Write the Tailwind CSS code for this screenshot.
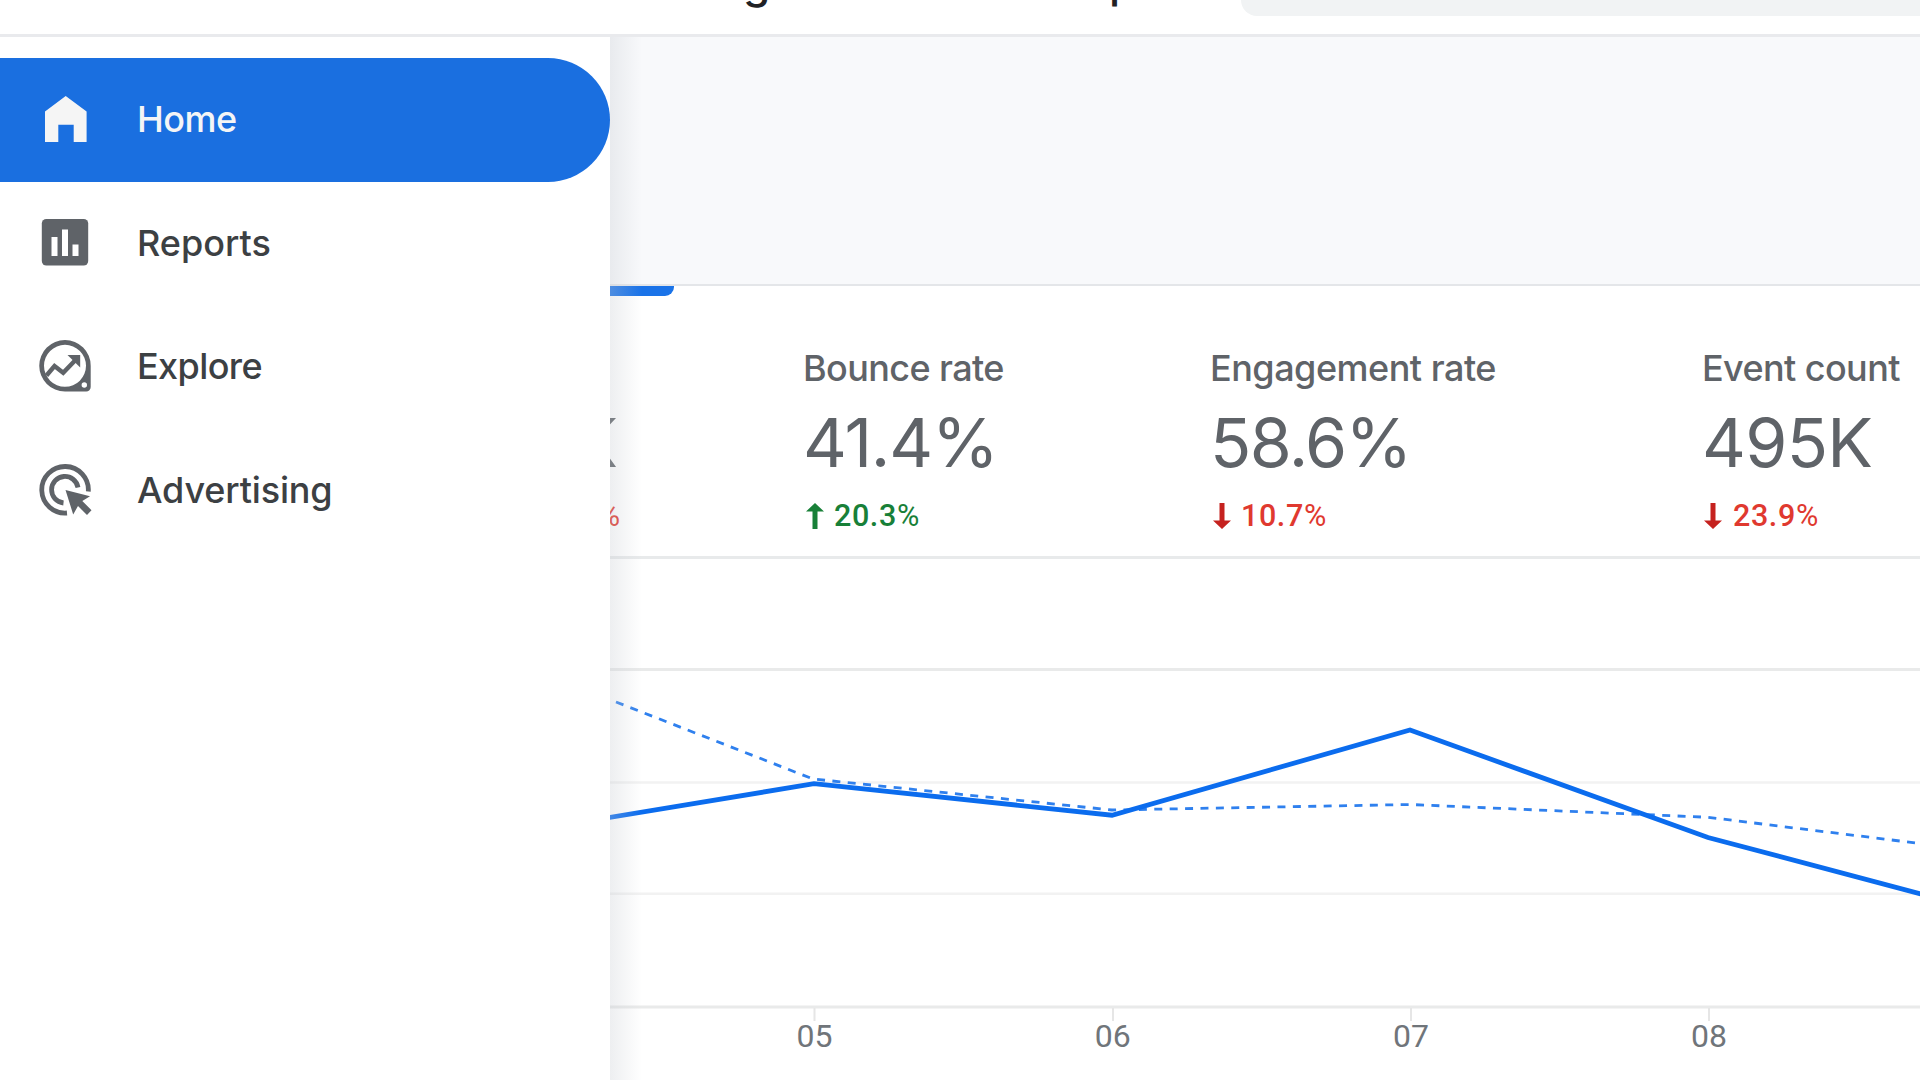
<!DOCTYPE html>
<html lang="en">
  <head>
    <meta charset="UTF-8" />
    <meta name="viewport" content="width=device-width, initial-scale=1.0" />
    <title>Analytics</title>
    <script src="https://cdn.jsdelivr.net/npm/@tailwindcss/browser@4"></script>
  </head>
  <body class="bg-white font-['Inter',sans-serif] h-screen flex flex-col overflow-hidden">
    <header class="h-[37px] shrink-0 border-b-[3px] border-[#e9eaed] flex items-start overflow-hidden">
      <div class="w-[1241px] shrink-0 flex pl-[743px] text-[44px] leading-[44px] -mt-[40px] text-[#202124] font-medium">
        <span class="w-[366px]">g</span>
        <span>p</span>
      </div>
      <div class="flex-1 h-4 rounded-bl-[16px] bg-[#f1f3f4]"></div>
    </header>

    <div class="flex flex-1 min-h-0">
      <!-- Navigation -->
      <nav class="w-[610px] shrink-0 pt-[21px] text-[36px] font-medium text-[#3c4043]">
        <a class="flex items-center h-[123.7px] pl-[37px] gap-[44px] rounded-r-full bg-[#1a6fe0] text-[#f4f5f6]">
          <svg class="size-14" viewBox="0 0 56 56" fill="#f5f5f5">
            <path d="M28.7 4 49.6 19.5V50H36.7V32.8H21.3V50H8V19.5z" />
          </svg>
          <span class="pb-0.5 -tracking-[0.5px]">Home</span>
        </a>
        <a class="flex items-center h-[123.7px] pl-[37px] gap-[44px]">
          <svg class="size-14" viewBox="0 0 56 56">
            <rect x="4.8" y="3" width="46.4" height="46.6" rx="4.5" fill="#5f6368" />
            <path d="M14.5 21h6v19h-6zM25 13.5h6v26.5h-6zM35.5 28.5h6v11.5h-6z" fill="#fff" />
          </svg>
          <span class="pb-0.5">Reports</span>
        </a>
        <a class="flex items-center h-[123.7px] pl-[37px] gap-[44px]">
          <svg class="size-14" viewBox="0 0 56 56">
            <path fill="#5f6368" fill-rule="evenodd" d="M28 1a25.7 25.7 0 0 1 25.7 25.7V48a4.5 4.5 0 0 1-4.5 4.5H28A25.7 25.7 0 0 1 28 1zM28 5.8a21 21 0 1 0 0 42 21 21 0 0 0 0-42zM47.3 43.3a2.7 2.7 0 1 0 0 5.4 2.7 2.7 0 0 0 0-5.4z" />
            <path d="M9.500 36.5 17.5 27 26.2 33.8 39 20.5" fill="none" stroke="#5f6368" stroke-width="4.4" />
            <path d="M30.5 16H43.2V28.5z" fill="#5f6368" />
          </svg>
          <span class="pb-0.5 -tracking-[0.6px]">Explore</span>
        </a>
        <a class="flex items-center h-[123.7px] pl-[37px] gap-[44px]">
          <svg class="size-14" viewBox="0 0 56 56">
            <path d="M51.3 28.5A23.3 23.3 0 1 0 30 50" fill="none" stroke="#5f6368" stroke-width="4.8" />
            <path d="M41 24.5A13.3 13.3 0 1 0 26.5 40" fill="none" stroke="#5f6368" stroke-width="4.8" />
            <path d="M28.5 27 53 33.3 45.3 38 54.5 47.2 50 52 41 43 36.2 51.5z" fill="#5f6368" />
          </svg>
          <span class="pb-0.5 -tracking-[0.15px]">Advertising</span>
        </a>
      </nav>

      <main class="relative flex-1 min-w-0 flex flex-col overflow-hidden">
        <div class="h-[249px] shrink-0 bg-[#f8f9fb] border-b-2 border-[#e4e6e9]"></div>

        <!-- Metrics -->
        <section class="relative h-[273px] shrink-0 border-b-[3px] border-[#e8eaeb] flex pt-[62px] text-[#5f6368]">
          <div class="absolute top-0 left-0 w-16 h-[10px] bg-[#1a73e8] rounded-br-[9px]"></div>
          <div class="w-[193px] shrink-0">
            <div class="w-[10px] pt-[54px] flex flex-col items-end">
              <span class="mr-[2px] text-[68px] leading-[80px]">K</span>
              <span class="mt-[16px] text-[30.5px] leading-9 font-['Roboto'] text-[#e0392f]">%</span>
            </div>
          </div>
          <div class="w-[407px] shrink-0">
            <p class="text-[36px] leading-10 font-medium -tracking-[0.6px]">Bounce rate</p>
            <p class="mt-[14px] text-[68px] leading-[80px] -tracking-[1.2px]">41.4%</p>
            <p class="mt-[16px] pl-[3px] flex items-center gap-[10px] text-[30.5px] leading-9 font-['Roboto'] font-medium tracking-[0.6px] text-[#188038]">
              <svg class="w-[18px] h-[26px]" viewBox="0 0 18 26" fill="#188038"><path d="M9 0 18 8.5H11.5V26H6.5V8.5H0z" /></svg>
              <span>20.3<span class="font-normal">%</span></span>
            </p>
          </div>
          <div class="w-[492px] shrink-0">
            <p class="text-[36px] leading-10 font-medium -tracking-[0.5px]">Engagement rate</p>
            <p class="mt-[14px] text-[68px] leading-[80px] -tracking-[1.6px]">58.6%</p>
            <p class="mt-[16px] pl-[3px] flex items-center gap-[10px] text-[30.5px] leading-9 font-['Roboto'] font-medium tracking-[0.6px] text-[#e0392f]">
              <svg class="w-[18px] h-[26px]" viewBox="0 0 18 26" fill="#c5221f"><path d="M9 26 0 17.5H6.5V0H11.5V17.5H18z" /></svg>
              <span>10.7<span class="font-normal">%</span></span>
            </p>
          </div>
          <div class="shrink-0">
            <p class="text-[36px] leading-10 font-medium -tracking-[0.6px]">Event count</p>
            <p class="mt-[14px] text-[68px] leading-[80px] -tracking-[0.7px]">495K</p>
            <p class="mt-[16px] pl-[2px] flex items-center gap-[11px] text-[30.5px] leading-9 font-['Roboto'] font-medium tracking-[0.6px] text-[#e0392f]">
              <svg class="w-[18px] h-[26px]" viewBox="0 0 18 26" fill="#c5221f"><path d="M9 26 0 17.5H6.5V0H11.5V17.5H18z" /></svg>
              <span>23.9<span class="font-normal">%</span></span>
            </p>
          </div>
        </section>

        <!-- Daily trend, drawn in page coordinates -->
        <svg class="w-[1310px] h-[521px] shrink-0" viewBox="610 559 1310 521" fill="none">
          <path d="M610 669.5H1920M610 1007H1920" stroke="#e9eaea" stroke-width="3" />
          <path d="M610 782.5H1920M610 893.7H1920" stroke="#f2f2f2" stroke-width="2.5" />
          <path d="M814.5 1008V1021M1113 1008V1021M1411 1008V1021M1709 1008V1021" stroke="#e6e6e6" stroke-width="2" />
          <path d="M616 702 813 779 1112 810 1410 804.5 1708 817.3 1920 843.5" stroke="#2f80ee" stroke-width="2.8" stroke-dasharray="8 7.4" />
          <path d="M600 819 814 783.7 1112 815.2 1410 730 1708 837.5 1925 895" stroke="#0b6cee" stroke-width="4.8" />
          <g fill="#70757a" class="font-['Roboto'] text-[32px]" text-anchor="middle">
            <text x="814.5" y="1047">05</text>
            <text x="1112.7" y="1047">06</text>
            <text x="1411" y="1047">07</text>
            <text x="1709" y="1047">08</text>
          </g>
        </svg>

        <div class="absolute inset-y-0 left-0 w-8 bg-linear-to-r from-[#c4c8cf]/30 to-[#c4c8cf]/0"></div>
      </main>
    </div>
  </body>
</html>
